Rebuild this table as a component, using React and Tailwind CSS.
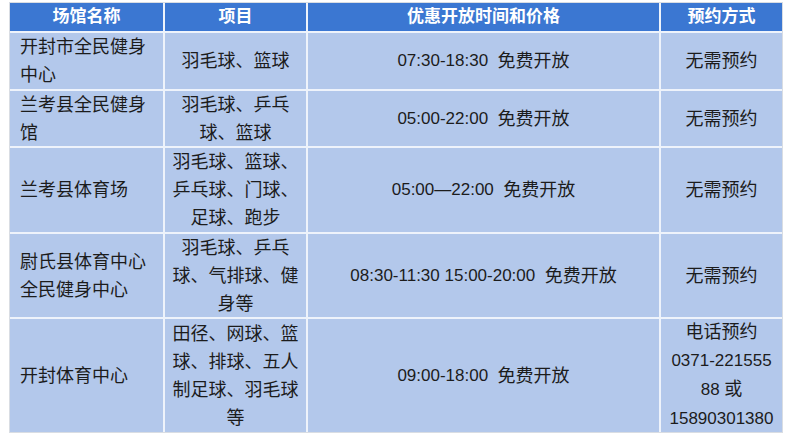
import React from "react";

const rows = [
  {
    name: ["开封市全民健身", "中心"],
    items: ["羽毛球、篮球"],
    time: "07:30-18:30  免费开放",
    book: ["无需预约"],
  },
  {
    name: ["兰考县全民健身", "馆"],
    items: ["羽毛球、乒乓", "球、篮球"],
    time: "05:00-22:00  免费开放",
    book: ["无需预约"],
  },
  {
    name: ["兰考县体育场"],
    items: ["羽毛球、篮球、", "乒乓球、门球、", "足球、跑步"],
    time: "05:00—22:00  免费开放",
    book: ["无需预约"],
  },
  {
    name: ["尉氏县体育中心", "全民健身中心"],
    items: ["羽毛球、乒乓", "球、气排球、健", "身等"],
    time: "08:30-11:30 15:00-20:00  免费开放",
    book: ["无需预约"],
  },
  {
    name: ["开封体育中心"],
    items: ["田径、网球、篮", "球、排球、五人", "制足球、羽毛球", "等"],
    time: "09:00-18:00  免费开放",
    book: ["电话预约", "0371-221555", "88 或", "15890301380"],
  },
];

// latin digits a touch smaller than the CJK glyphs
const Mixed = ({ text }) =>
  text.split(/([0-9:\-— ]+)/).map((part, i) =>
    /[0-9]/.test(part) ? (
      <span key={i} className="text-[17px]">
        {part}
      </span>
    ) : (
      part
    )
  );

const Lines = ({ lines }) =>
  lines.map((l, i) => (
    <span key={i} className="block">
      <Mixed text={l} />
    </span>
  ));

export default function App() {
  return (
    <div className="w-[800px] h-[433px] bg-white overflow-hidden pt-[2px] pl-[9px]">
      <div
        className="grid w-[774px] gap-[2px] bg-[#eef3fb] border border-[#d9dde3] grid-cols-[153px_141px_351px_121px] grid-rows-[28px_56px_55px_84px_83px_113px] text-[18px] leading-[28px] text-[#1c1c1c]"
        style={{ fontFamily: '"Liberation Sans", "Noto Sans CJK SC", sans-serif' }}
      >
        {["场馆名称", "项目", "优惠开放时间和价格", "预约方式"].map((h) => (
          <div
            key={h}
            className="flex items-center justify-center bg-[#3b77d2] text-white font-bold text-[17px]"
          >
            {h}
          </div>
        ))}
        {rows.map((r, i) => (
          <React.Fragment key={i}>
            <div className="flex flex-col justify-center bg-[#b3c8eb] pl-[10px]">
              <Lines lines={r.name} />
            </div>
            <div className="flex flex-col justify-center items-center text-center bg-[#b3c8eb]">
              <Lines lines={r.items} />
            </div>
            <div className="flex items-center justify-center bg-[#b3c8eb] whitespace-pre">
              <Mixed text={r.time} />
            </div>
            <div className="flex flex-col justify-center items-center text-center bg-[#b3c8eb]">
              <Lines lines={r.book} />
            </div>
          </React.Fragment>
        ))}
      </div>
    </div>
  );
}
